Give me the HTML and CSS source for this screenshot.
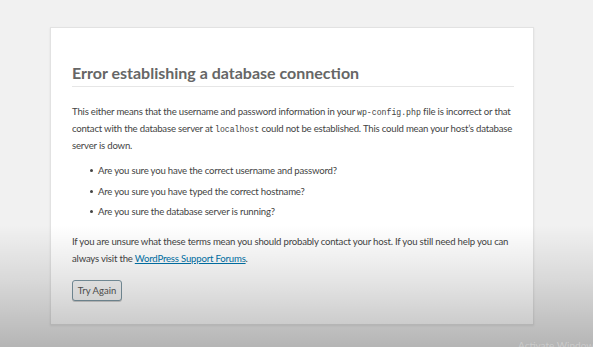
FILE: index.html
```html
<!DOCTYPE html>
<html>
<head>
<meta charset="utf-8">
<link rel="stylesheet" href="styles.css">
</head>
<body>
<div class="card">
  <h1 class="title">Error establishing a database connection</h1>
  <p class="para first">This either means that the username and password information in your <code>wp-config.php</code> file is incorrect or that contact with the database server at <code>localhost</code> could not be established. This could mean your host’s database server is down.</p>
  <ul class="list">
    <li>Are you sure you have the correct username and password?</li>
    <li>Are you sure you have typed the correct hostname?</li>
    <li>Are you sure the database server is running?</li>
  </ul>
  <p class="para">If you are unsure what these terms mean you should probably contact your host. If you still need help you can always visit the <a class="link" href="#">WordPress Support Forums</a>.</p>
  <div class="actions"><button class="btn">Try Again</button></div>
</div>
<div class="shade"></div>
<div class="watermark">Activate Windows</div>
</body>
</html>
```
FILE: styles.css
```css
html, body { margin: 0; padding: 0; }
body {
  background: #f1f1f1;
  font-family: Lato, "Open Sans", sans-serif;
  color: #444;
  height: 347px;
  overflow: hidden;
  position: relative;
}
.card {
  margin: 27px 0 0 50px;
  width: 442px;
  padding: 35px 19px 23px 21px;
  background: #fff;
  border: 1px solid #e2e2e2;
  box-shadow: 0 1px 2px rgba(0,0,0,0.08);
}
.title {
  margin: 0;
  font-size: 16px;
  font-weight: 700;
  color: #666;
  line-height: 20px;
  padding-bottom: 3px;
  border-bottom: 1px solid #e6e6e6;
}
.para {
  margin: 13px 0 0 0;
  font-size: 9.6px;
  letter-spacing: -0.2px;
  line-height: 17px;
}
.para.first { margin-top: 16px; }
code {
  font-family: "Liberation Mono", "DejaVu Sans Mono", monospace;
  font-size: 8.2px;
  letter-spacing: 0;
  line-height: 1;
}
.list {
  margin: 8px 0 0 0;
  padding-left: 26px;
  list-style: none;
  font-size: 9.6px;
  letter-spacing: -0.2px;
  line-height: 17px;
}
.list li {
  margin-top: 3.5px;
  position: relative;
}
.list li::before {
  content: "";
  position: absolute;
  left: -8px;
  top: 7px;
  width: 3px;
  height: 3px;
  border-radius: 50%;
  background: #444;
}
.link { color: #0073aa; }
.actions { margin-top: 11px; }
.btn {
  font-family: inherit;
  font-size: 9.5px;
  color: #555;
  background: #f7f7f7;
  border: 1px solid #7d97a3;
  border-radius: 3px;
  padding: 0;
  width: 50px;
  height: 21px;
  line-height: 19px;
  box-shadow: 0 1px 0 #d0d0d0;
}
.shade {
  position: absolute;
  left: 0; right: 0; top: 0; bottom: 0;
  background: linear-gradient(to bottom, rgba(0,0,0,0) 0px, rgba(0,0,0,0) 225px, rgba(0,0,0,0.1) 280px, rgba(0,0,0,0.25) 347px);
  pointer-events: none;
}
.watermark {
  position: absolute;
  left: 518px;
  top: 339px;
  font-size: 10px;
  line-height: 12px;
  color: rgba(255,255,255,0.3);
  white-space: nowrap;
}
```
